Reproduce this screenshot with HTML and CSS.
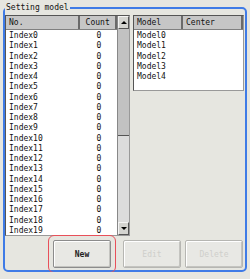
FILE: index.html
```html
<!DOCTYPE html>
<html>

<head>
    <title>Setting model</title>
    <link rel="stylesheet" href="styles.css">
</head>

<body>
    <fieldset class="group">
        <legend>Setting model</legend>
        <div class="lists">
            <div class="list index-list">
                <div class="table">
                    <div class="head">
                        <span class="col-no">No.</span>
                        <span class="col-count">Count</span>
                    </div>
                    <div class="rows" id="indexRows"></div>
                </div>
                <div class="scrollbar">
                    <div class="sb-btn"><span class="arrow-up"></span></div>
                    <div class="sb-thumb"></div>
                    <div class="sb-track"></div>
                    <div class="sb-btn"><span class="arrow-down"></span></div>
                </div>
            </div>
            <div class="list model-list">
                <div class="head">
                    <span class="col-model">Model</span>
                    <span class="col-center">Center</span>
                </div>
                <div class="rows">
                    <div class="row">Model0</div>
                    <div class="row">Model1</div>
                    <div class="row">Model2</div>
                    <div class="row">Model3</div>
                    <div class="row">Model4</div>
                </div>
            </div>
        </div>
        <div class="buttons">
            <span class="focus-ring"><button type="button" class="btn">New</button></span>
            <button type="button" class="btn btn-edit" disabled>Edit</button>
            <button type="button" class="btn" disabled>Delete</button>
        </div>
    </fieldset>

    <script>
        var rows = document.getElementById("indexRows");
        for (var i = 0; i < 20; i++) {
            var row = document.createElement("div");
            row.className = "row";
            row.innerHTML = '<span class="col-no">Index' + i + '</span><span class="col-count">0</span>';
            rows.appendChild(row);
        }
    </script>
</body>

</html>
```
FILE: styles.css
```css
body {
    margin: 0;
    background-color: #e6e6e0;
    font-family: "DejaVu Sans Mono", monospace;
    font-size: 8px;
    color: #111;
}

.group {
    margin: 2px 3px 0 3px;
    padding: 0 0 2px 0;
    width: 240px;
    border: 2px solid #3f7be6;
    border-radius: 5px;
}

.group legend {
    padding: 0 1px;
    margin-left: 0;
    line-height: 12px;
}

.lists {
    display: flex;
    align-items: flex-start;
    gap: 3px;
    margin-top: 1px;
}

.list {
    background-color: #fff;
    border: 1px solid #555;
    border-right-color: #999;
    border-bottom-color: #999;
}

.index-list {
    display: flex;
    width: 123px;
    height: 219px;
}

.index-list .table {
    width: 111px;
}

.model-list {
    width: 109px;
    height: 74px;
}

.head {
    display: flex;
    height: 13px;
    line-height: 13px;
    background-color: #c6c6c6;
    border-bottom: 1px solid #808080;
}

.head span {
    border-right: 2px solid #6a6a6a;
    padding-left: 3px;
}

.head .col-count,
.row .col-count {
    text-align: center;
    padding-left: 0;
}

.col-no {
    width: 72px;
}

.col-count {
    width: 36px;
}

.col-model {
    width: 44px;
}

.col-center {
    flex: 1;
}

.rows {
    padding-top: 1px;
}

.row {
    display: flex;
    height: 10.25px;
    line-height: 10px;
    padding-left: 3px;
}

.index-list .row {
    padding-left: 0;
}

.index-list .row .col-no {
    padding-left: 3px;
}

.scrollbar {
    display: flex;
    flex-direction: column;
    width: 11px;
    border-left: 1px solid #888;
}

.sb-btn {
    display: flex;
    align-items: center;
    justify-content: center;
    height: 11px;
    background-color: #d4d4d0;
    border: 1px solid #f4f4f4;
    border-right-color: #555;
    border-bottom-color: #555;
}

.sb-thumb {
    height: 106px;
    background-color: #c2c2c2;
    border-bottom: 1px solid #555;
}

.sb-track {
    flex: 1;
    background-color: #dcdcdc;
}

.arrow-up {
    width: 0;
    height: 0;
    border-left: 3px solid transparent;
    border-right: 3px solid transparent;
    border-bottom: 3px solid #000;
}

.arrow-down {
    width: 0;
    height: 0;
    border-left: 3px solid transparent;
    border-right: 3px solid transparent;
    border-top: 3px solid #000;
}

.buttons {
    display: flex;
    align-items: center;
    margin-top: 4px;
    padding-left: 43px;
}

.focus-ring {
    display: inline-block;
    margin: -5px 7px -5px 0;
    padding: 4px;
    border: 1px solid #e8505a;
    border-radius: 6px;
}

.btn {
    display: block;
    width: 58px;
    height: 28px;
    padding: 0;
    font-family: "DejaVu Sans Mono", monospace;
    font-size: 8px;
    font-weight: bold;
    color: #222;
    background-color: #e8e8e4;
    border: 1px solid #8c8c8c;
    border-radius: 2px;
    box-shadow: inset 1px 1px 0 #fff, inset -1px -1px 0 #c4c4c0;
}

.btn:disabled {
    font-weight: normal;
    color: #cfcfcb;
    border-color: #b6b6b2;
}

.btn-edit {
    margin-right: 4px;
}
```
